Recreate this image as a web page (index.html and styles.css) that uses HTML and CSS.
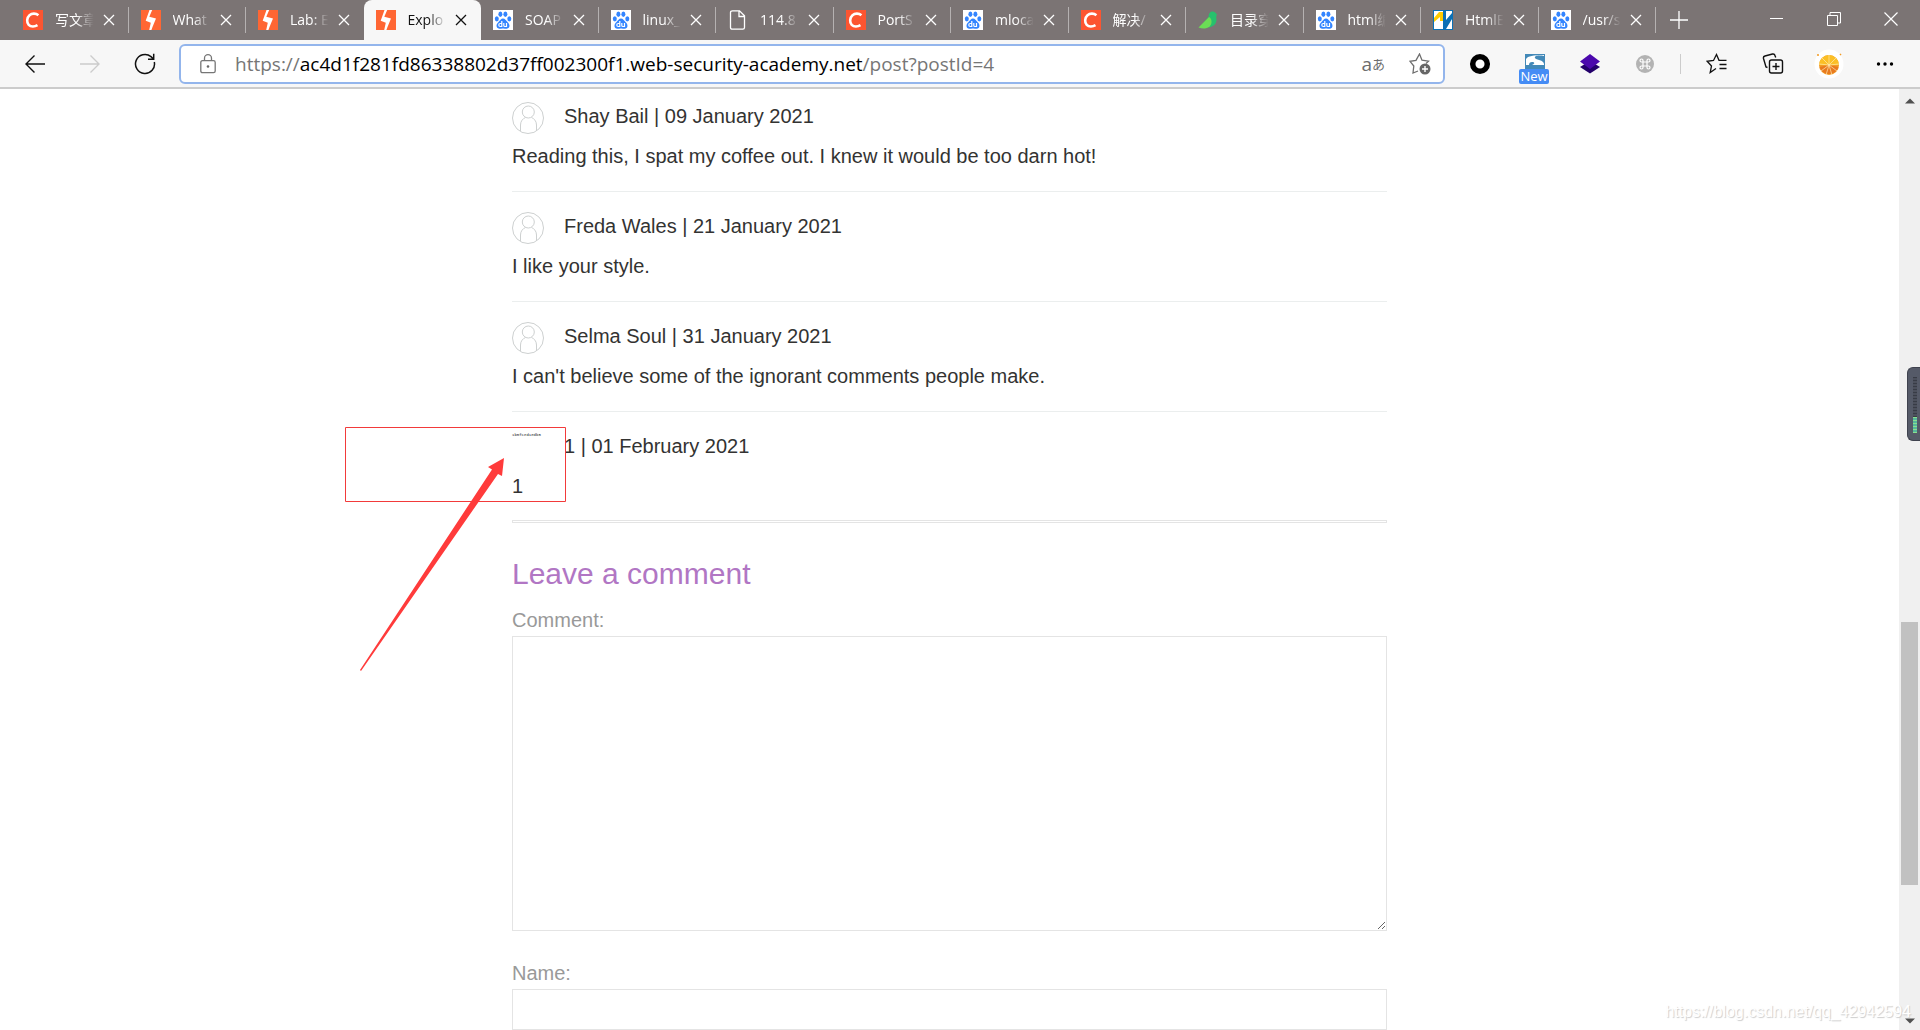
FILE: index.html
```html
<!DOCTYPE html>
<html lang="en">
<head>
<meta charset="utf-8">
<title>Exploiting XXE via image file upload</title>
<link rel="stylesheet" href="styles.css">
</head>
<body>
<svg class="defs" aria-hidden="true">
  <symbol id="csdn" viewBox="0 0 20 20"><rect width="20" height="20" fill="#fc5531"/><path d="M15.400 5.200C12.800 3 8.800 3.200 6.500 5.200c-2.900 2.600-3 7.400-.8 9.600 2.200 2.200 6.100 1.900 8.800.4" fill="none" stroke="#fff" stroke-width="2.600"/></symbol>
  <symbol id="burp" viewBox="0 0 20 20"><rect width="20" height="20" fill="#ff6633"/><path d="M8.500 0h2.700L8.300 6.800l6.700 1.700-3.400 8.200L10.400 20H8.200l1.600-7.300L4.700 10.800 8.500 0z" fill="#fff"/><path d="M7.500 4.500L4.700 10.800l5.800 1.500L8.800 20M11 8.300L9.500 7.800" fill="none"/></symbol>
  <symbol id="baidu" viewBox="0 0 20 20"><rect width="20" height="20" fill="#fff"/><g fill="#3385ff"><ellipse cx="3.800" cy="8.800" rx="2" ry="2.600"/><ellipse cx="7.400" cy="4.300" rx="2" ry="2.700"/><ellipse cx="12.400" cy="4.300" rx="2" ry="2.700"/><ellipse cx="16.300" cy="8.800" rx="2" ry="2.600"/><path d="M10 8.500c2 0 3 2 4.500 3.500 3 2.600 2.500 6.500-.8 6.700-1.500 0-2.400-.3-3.700-.3s-2.200.3-3.700.3C3 18.500 2.500 14.600 5.500 12 7 10.500 8 8.500 10 8.500z"/></g><path d="M8.800 11v5.500H7.300a1.300 1.300 0 0 1 0-3h1.500M10.800 13v2.500q0 1 1 1h1.700V13" fill="none" stroke="#fff" stroke-width="1.200"/></symbol>
  <symbol id="file" viewBox="0 0 20 20"><path d="M4.500.8h7l5 5v11.700q0 1.700-1.700 1.700H4.200q-1.700 0-1.700-1.700v-15Q2.500.8 4.500.8zM11 1v5.500h5.500" fill="none" stroke="#fff" stroke-width="1.300"/></symbol>
  <symbol id="bird" viewBox="0 0 20 20"><path d="M19 4.500C17 2 16 1 14 1.500c-3 .7-3 3-3.500 5.500L3 16c7 3 15 1 15.500-6 .1-2-1-3.500.5-5.500z" fill="#27c06d"/><path d="M.5 17.500L11 7c4 2 3.500 10-3 11.300-3 .5-5 0-7.500-.8z" fill="#6bdc55"/></symbol>
  <symbol id="py" viewBox="0 0 20 20"><rect width="20" height="20" fill="#fff"/><path d="M0 0h20v20H0zM1 1v18h18V1z" fill="#0b70b5" fill-rule="evenodd"/><path d="M1 8l5-6h4v9H7V7l-6 5z" fill="#fc0"/><path d="M10 1h3v9l6-7v6l-6 10h-3z" fill="#0b70b5"/></symbol>
  <symbol id="x" viewBox="0 0 12 12"><path d="M1 1l10 10M11 1L1 11" fill="none" stroke="currentColor" stroke-width="1.300"/></symbol>
  <symbol id="avatar" viewBox="0 0 32 32"><g fill="none" stroke="#cdd0d0"><circle cx="16" cy="16" r="15.500"/><circle cx="16.300" cy="10" r="6"/><path d="M8.500 29V23c0-4 2.500-6.500 5-7.500M24.500 29V23c0-4-2.500-6.500-5-7.500"/></g></symbol>
</svg>

<header class="browser">
  <div class="tabstrip">
    <nav class="tabs" aria-label="Tabs">
      <div class="tab"><svg class="fav"><use href="#csdn"/></svg><span class="title">写文章</span><button class="close" aria-label="Close tab"><svg><use href="#x"/></svg></button></div>
      <div class="tab"><svg class="fav"><use href="#burp"/></svg><span class="title">What</span><button class="close" aria-label="Close tab"><svg><use href="#x"/></svg></button></div>
      <div class="tab before"><svg class="fav"><use href="#burp"/></svg><span class="title">Lab: E</span><button class="close" aria-label="Close tab"><svg><use href="#x"/></svg></button></div>
      <div class="tab active"><svg class="fav"><use href="#burp"/></svg><span class="title">Explo</span><button class="close" aria-label="Close tab"><svg><use href="#x"/></svg></button></div>
      <div class="tab"><svg class="fav"><use href="#baidu"/></svg><span class="title">SOAP</span><button class="close" aria-label="Close tab"><svg><use href="#x"/></svg></button></div>
      <div class="tab"><svg class="fav"><use href="#baidu"/></svg><span class="title">linux_</span><button class="close" aria-label="Close tab"><svg><use href="#x"/></svg></button></div>
      <div class="tab"><svg class="fav"><use href="#file"/></svg><span class="title">114.8</span><button class="close" aria-label="Close tab"><svg><use href="#x"/></svg></button></div>
      <div class="tab"><svg class="fav"><use href="#csdn"/></svg><span class="title">PortS</span><button class="close" aria-label="Close tab"><svg><use href="#x"/></svg></button></div>
      <div class="tab"><svg class="fav"><use href="#baidu"/></svg><span class="title">mloca</span><button class="close" aria-label="Close tab"><svg><use href="#x"/></svg></button></div>
      <div class="tab"><svg class="fav"><use href="#csdn"/></svg><span class="title">解决/</span><button class="close" aria-label="Close tab"><svg><use href="#x"/></svg></button></div>
      <div class="tab"><svg class="fav"><use href="#bird"/></svg><span class="title">目录穿</span><button class="close" aria-label="Close tab"><svg><use href="#x"/></svg></button></div>
      <div class="tab"><svg class="fav"><use href="#baidu"/></svg><span class="title">html编</span><button class="close" aria-label="Close tab"><svg><use href="#x"/></svg></button></div>
      <div class="tab"><svg class="fav"><use href="#py"/></svg><span class="title">HtmlE</span><button class="close" aria-label="Close tab"><svg><use href="#x"/></svg></button></div>
      <div class="tab"><svg class="fav"><use href="#baidu"/></svg><span class="title">/usr/s</span><button class="close" aria-label="Close tab"><svg><use href="#x"/></svg></button></div>
    </nav>
    <button class="newtab" aria-label="New tab"><svg width="18" height="18" viewBox="0 0 18 18"><path d="M9 0v18M0 9h18" stroke="#fff" stroke-width="1.300"/></svg></button>
    <div class="window-controls">
      <button aria-label="Minimize"><svg width="14" height="14" viewBox="0 0 14 14"><path d="M0 6.500h13" stroke="#fff"/></svg></button>
      <button aria-label="Restore"><svg width="14" height="14" viewBox="0 0 14 14"><path d="M.5 3.500h10v10H.5zM3 3V.5h10.500V11H11" fill="none" stroke="#fff"/></svg></button>
      <button aria-label="Close window"><svg width="14" height="14" viewBox="0 0 14 14"><path d="M.5.5l13 13M13.500.5l-13 13" stroke="#fff" stroke-width="1.200"/></svg></button>
    </div>
  </div>
  <div class="toolbar">
    <div class="nav-buttons">
      <button aria-label="Back"><svg width="22" height="22" viewBox="0 0 22 22"><path d="M21 11H2M10.500 2.500L2 11l8.500 8.500" fill="none" stroke="#111" stroke-width="1.400"/></svg></button>
      <button aria-label="Forward" disabled><svg width="22" height="22" viewBox="0 0 22 22"><path d="M1 11h19M11.500 2.500L20 11l-8.500 8.500" fill="none" stroke="#ccc" stroke-width="1.400"/></svg></button>
      <button aria-label="Refresh"><svg width="22" height="22" viewBox="0 0 22 22"><path d="M20.300 9A9.500 9.500 0 1 1 17 3.600L19.500 6M19.700.8V6.300H14" fill="none" stroke="#111" stroke-width="1.500"/></svg></button>
    </div>
    <div class="address">
      <svg width="16" height="20" viewBox="0 0 16 20"><path d="M2.500 6.700h11q1.700 0 1.700 1.700v8.500q0 1.700-1.700 1.700h-11q-1.700 0-1.700-1.700V8.400q0-1.700 1.700-1.700zM4.500 6.700V4.200a3.500 3.500 0 0 1 7 0v2.500" fill="none" stroke="#767676" stroke-width="1.300"/><circle cx="8" cy="12.500" r="1.300" fill="#666"/></svg>
      <a class="url" href="#"><span>https://</span>ac4d1f281fd86338802d37ff002300f1.web-security-academy.net<span>/post?postId=4</span></a>
      <button class="translate" aria-label="Translate">a<small>あ</small></button>
      <button aria-label="Add to favorites"><svg width="22" height="22" viewBox="0 0 22 22"><path d="M9 18l-5 2 .8-7L1 8.300l6-1L10.500 1 13 7.200l6.500 1L17 10.500" fill="none" stroke="#6d6d6d" stroke-width="1.300"/><circle cx="16" cy="16" r="5.500" fill="#666"/><path d="M16 13v6M13 16h6" stroke="#fff" stroke-width="1.400"/></svg></button>
    </div>
    <div class="extensions">
      <button aria-label="Circle extension"><svg width="22" height="22" viewBox="0 0 22 22"><circle cx="11" cy="11" r="7.300" fill="#fff" stroke="#000" stroke-width="5.500"/></svg></button>
      <button class="ext-new" aria-label="Capture extension"><svg width="22" height="22" viewBox="0 0 22 22"><path d="M1 1h20v18H1z" fill="#4389b8"/><path d="M2 11V6c2-3 7-4 18-4v1c-6-1-10 0-9 2 1 2 9 2 9 6v1H8c3-1 3-3 0-3-2 0-3 1-3 3H2z" fill="#fff"/></svg><span>New</span></button>
      <button aria-label="Layers extension"><svg width="22" height="22" viewBox="0 0 22 22"><path d="M1 14l10-6 10 6-10 6.500z" fill="#24006b"/><path d="M1 8.500L11 1l10 7.500L11 16z" fill="#4b08ad"/></svg></button>
      <button aria-label="Command extension"><svg width="20" height="20" viewBox="0 0 20 20"><circle cx="10" cy="10" r="9" fill="#b3b3b3"/><path d="M8 8h4v4H8zM8 8H6.500A1.500 1.500 0 1 1 8 6.500zM12 8V6.500A1.500 1.500 0 1 1 13.500 8zM12 12h1.500a1.500 1.500 0 1 1-1.500 1.500zM8 12v1.500A1.500 1.500 0 1 1 6.500 12z" fill="none" stroke="#fff" stroke-width="1.200"/></svg></button>
    </div>
    <div class="tools">
      <button aria-label="Favorites"><svg width="22" height="22" viewBox="0 0 22 22"><path d="M10 15.500L4.200 19.500 5.500 13 1.200 8.300l6.300-.8L10.500 1.500 13 7.300h7.500M13.500 11.500h7M13.500 15.500h7" fill="none" stroke="#111" stroke-width="1.300"/></svg></button>
      <button aria-label="Collections"><svg width="22" height="22" viewBox="0 0 22 22"><path d="M7.500 9q0-2 2-2h9q2 0 2 2v9q0 2-2 2h-9q-2 0-2-2zM14 10v7M10.500 13.500h7M5.500 14.500L4 14 1.500 5.500q-.5-2 1.500-2.500l7.500-2q2-.4 2.500 1.500l.7 2" fill="none" stroke="#111" stroke-width="1.400"/></svg></button>
      <button aria-label="Profile"><svg width="30" height="30" viewBox="0 0 30 30"><circle cx="15" cy="15" r="14.500" fill="#fff"/><circle cx="15" cy="16" r="10" fill="#f39b22"/><path d="M5 16a10 10 0 0 1 20 0z" fill="#fbbf26"/><path d="M5.500 18a10 10 0 0 0 19 0L15 16z" fill="#e87a20"/><path d="M15 16V6M15 16L8 9M15 16l7-7M15 16l-10-1M15 16l10-1M15 16l-8 6M15 16l8 6M15 16l-3 10M15 16l3 10" stroke="#ffe9b0" stroke-width=".7"/><path d="M3 6h2M26 5l1 1" stroke="#f39b22" stroke-width="1.500"/></svg></button>
      <button aria-label="Settings and more"><svg width="18" height="18" viewBox="0 0 18 18"><circle cx="2.500" cy="9" r="1.700"/><circle cx="9" cy="9" r="1.700"/><circle cx="15.500" cy="9" r="1.700"/></svg></button>
    </div>
  </div>
</header>

<div class="viewport">
  <main class="page">
    <div class="content">
      <section class="comment">
        <p class="author"><svg class="avatar"><use href="#avatar"/></svg>Shay Bail | 09 January 2021</p>
        <p>Reading this, I spat my coffee out. I knew it would be too darn hot!</p>
      </section>
      <section class="comment">
        <p class="author"><svg class="avatar"><use href="#avatar"/></svg>Freda Wales | 21 January 2021</p>
        <p>I like your style.</p>
      </section>
      <section class="comment">
        <p class="author"><svg class="avatar"><use href="#avatar"/></svg>Selma Soul | 31 January 2021</p>
        <p>I can't believe some of the ignorant comments people make.</p>
      </section>
      <section class="comment marked">
        <p class="author"><span class="avatar hostname">1b5fced1edb5</span>1 | 01 February 2021</p>
        <p>1</p>
        <svg class="callout" width="222" height="246" viewBox="0 0 222 246"><path d="M.5.500h220v74H.5z" fill="none" stroke="#f23a3a"/><path d="M159 31L143 40l4 2.500L15 243l1 1L153 47l4 2z" fill="#ff3b3b"/></svg>
      </section>
      <hr>
      <form class="reply">
        <h2>Leave a comment</h2>
        <label for="comment">Comment:</label>
        <textarea id="comment"></textarea>
        <label for="name">Name:</label>
        <input id="name" type="text">
      </form>
    </div>
  </main>
  <div class="scrollbar" aria-hidden="true">
    <svg width="10" height="6" viewBox="0 0 10 6"><path d="M0 5.500h10L5 .5z" fill="#505050"/></svg>
    <div class="track"><div class="thumb"></div></div>
    <svg width="10" height="6" viewBox="0 0 10 6"><path d="M0 .5h10L5 5.500z" fill="#505050"/></svg>
  </div>
  <div class="meter" aria-hidden="true"><div class="idle"></div><div class="load"></div></div>
  <div class="watermark">https://blog.csdn.net/qq_42942594</div>
</div>
</body>
</html>
```
FILE: styles.css
```css
* { box-sizing: border-box; }
html, body { height: 100%; margin: 0; }
body {
  display: flex;
  flex-direction: column;
  overflow: hidden;
  background: #fff;
  color: #333332;
  font-family: "Liberation Sans", Arial, sans-serif;
  font-size: 20px;
}
.defs { position: absolute; width: 0; height: 0; }
button {
  display: flex;
  align-items: center;
  justify-content: center;
  padding: 0;
  border: 0;
  background: none;
  color: inherit;
  font: inherit;
}
svg { display: block; flex: none; }

/* Browser window */
.browser { flex: none; font-family: "Open Sans", "Noto Sans CJK SC", sans-serif; }
.tabstrip {
  display: flex;
  height: 40px;
  padding-left: 11px;
  background: #7b7474;
  color: #fff;
}
.tabs { display: flex; flex: 1; min-width: 0; }
.tab {
  display: flex;
  flex: 1 1 0;
  align-items: center;
  min-width: 0;
  padding: 0 13px 0 12px;
  border-right: 1px solid transparent;
  border-image: linear-gradient(transparent 8px, #b5b1b1 8px, #b5b1b1 32px, transparent 32px) 1;
  font-size: 14px;
}
.tab.before { border-image: none; }
.tab.active {
  border-image: none;
  border-radius: 8px 8px 0 0;
  background: #f7f7f7;
  color: #111;
}
.fav { width: 20px; height: 20px; }
.title {
  flex: 1;
  min-width: 0;
  margin: 0 6px 0 12px;
  overflow: hidden;
  white-space: nowrap;
  line-height: 24px;
  mask-image: linear-gradient(to right, #000 50%, transparent 92%);
}
.close svg { width: 12px; height: 12px; }
.newtab { width: 46px; margin-right: 46px; }
.window-controls { display: flex; margin-right: 1px; }
.window-controls button { width: 57px; height: 37px; }

.toolbar {
  display: flex;
  align-items: center;
  height: 49px;
  padding: 0 7px 0 7px;
  border-bottom: 2px solid #ccc;
  background: #f7f7f7;
}
.nav-buttons { display: flex; margin-right: 7px; }
.nav-buttons button { width: 55px; height: 40px; }
.address {
  display: flex;
  flex: 1;
  align-items: center;
  min-width: 0;
  height: 40px;
  padding: 0 12px 0 19px;
  border: 2px solid #93b5ec;
  border-radius: 6px;
  background: #fff;
}
.url {
  flex: 1;
  min-width: 0;
  margin-left: 19px;
  overflow: hidden;
  color: #000;
  font-size: 19px;
  text-decoration: none;
  white-space: nowrap;
}
.url span { color: #767676; }
.translate { margin-right: 24px; color: #6d6d6d; font-size: 19px; line-height: 20px; }
.translate small { font-size: 13px; }
.extensions {
  display: flex;
  padding: 0 8px 0 7px;
}
.extensions button { width: 55px; height: 40px; }
.ext-new { position: relative; }
.ext-new span {
  position: absolute;
  bottom: 0;
  left: 12px;
  width: 30px;
  border-radius: 2px;
  background: #458cf5;
  color: #fff;
  font-size: 13px;
  line-height: 15px;
}
.tools { display: flex; align-items: center; padding-left: 8px; }
.tools::before { content: ""; width: 1px; height: 20px; margin-left: -8px; margin-right: 8px; background: #ccc; }
.tools button { width: 56px; height: 40px; }

/* Page */
.viewport {
  position: relative;
  display: flex;
  flex: 1;
  min-height: 0;
}
.page { flex: 1; min-width: 0; overflow: hidden; }
.content { max-width: 875px; margin: 0 auto; }
.comment {
  height: 110px;
  padding-top: 13px;
  border-bottom: 1px solid #ebeeee;
}
.comment:first-child { height: 103px; padding-top: 6px; }
.comment p { margin: 0; line-height: 30px; }
.comment .author { display: flex; height: 46px; line-height: 42px; }
.comment .avatar { width: 32px; height: 32px; margin: 7px 20px 0 0; }
.comment.marked { position: relative; height: 108px; border-bottom: 0; }
.comment .hostname {
  margin-top: 6px;
  color: #222;
  font-family: "Liberation Mono", monospace;
  font-size: 4px;
  line-height: 8px;
}
.callout { position: absolute; top: 15px; left: -167px; }
hr {
  height: 3px;
  margin: 0;
  border: 1px solid #e4e4e4;
}
.reply { display: flex; flex-direction: column; padding-top: 30px; }
.reply h2 {
  margin: 0 0 9px;
  color: #b176c4;
  font-size: 30px;
  font-weight: 400;
  line-height: 42px;
}
.reply label { color: #999; line-height: 32px; }
.reply textarea,
.reply input {
  width: 100%;
  margin: 0;
  padding: 8px;
  border: 1px solid #e4e4e4;
  border-radius: 0;
  background: #fff;
  font: inherit;
}
.reply textarea { height: 295px; margin-bottom: 26px; resize: both; }
.reply input { height: 41px; }

.scrollbar {
  display: flex;
  flex-direction: column;
  align-items: center;
  width: 21px;
  padding: 9px 0 6px;
  background: #f0f0f0;
}
.track {
  display: flex;
  flex: 1;
  flex-direction: column;
  width: 17px;
  padding: 518px 0 133px;
}
.thumb { flex: 1; background: #c1c1c1; }
.meter {
  position: absolute;
  top: 278px;
  right: 0;
  width: 13px;
  height: 74px;
  padding: 9px 3px 8px 5px;
  border: 1px solid #3f424e;
  border-right: 0;
  border-radius: 6px 0 0 6px;
  background: #555a68;
}
.idle { height: 40px; background: repeating-linear-gradient(#383c46 0 1px, #4c505c 1px 3px); }
.load { height: 16px; background: repeating-linear-gradient(#8ae08e 0 1px, #55b79b 1px 3px); }
.watermark {
  position: absolute;
  right: 9px;
  bottom: 8px;
  color: #fff;
  font-size: 16px;
  line-height: 20px;
  text-shadow: 1px 1px 1px #ccc;
}
```
